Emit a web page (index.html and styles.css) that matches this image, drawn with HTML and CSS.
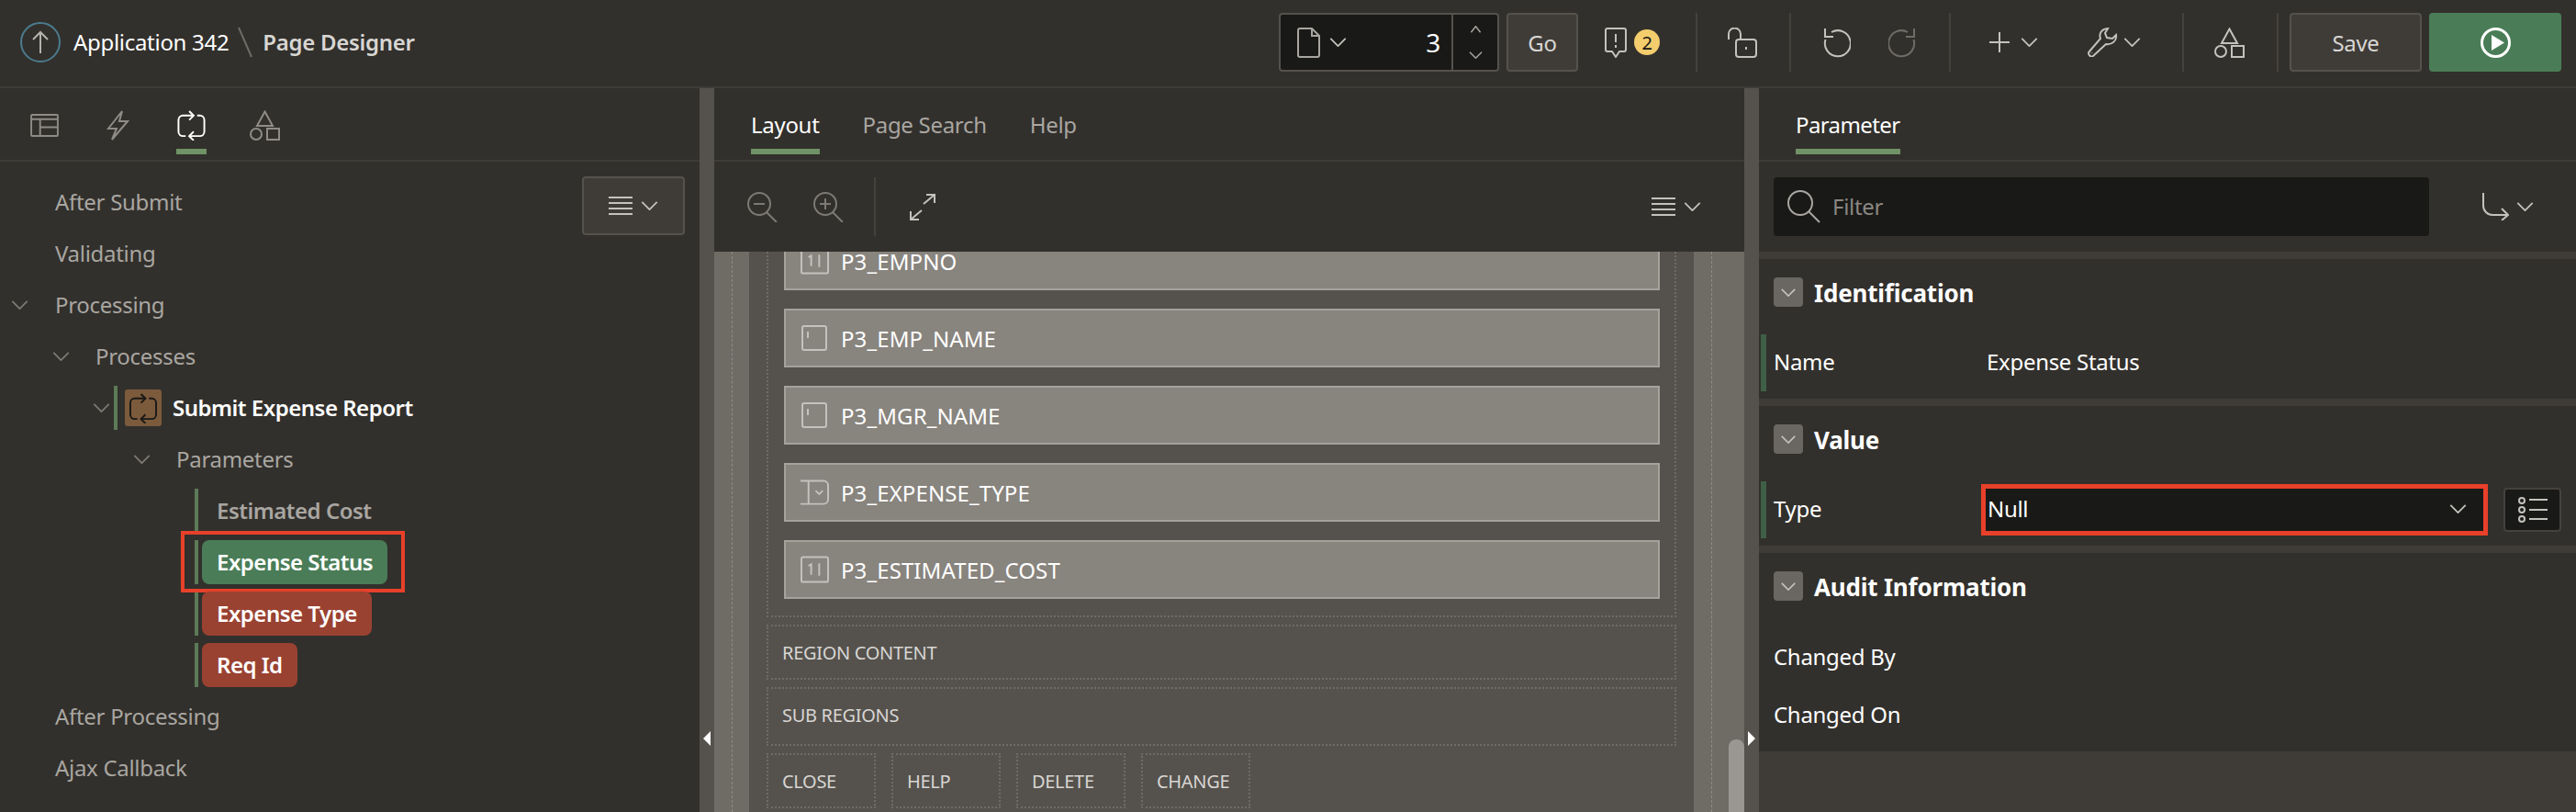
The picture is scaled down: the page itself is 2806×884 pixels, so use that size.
FILE: index.html
```html
<!DOCTYPE html>
<html>
<head>
    <title>Page Designer</title>
    <link rel="stylesheet" href="styles.css">
</head>
<body>
    <svg class="sprite" width="0" height="0">
        <symbol id="i-chev" viewBox="0 0 20 11"><path d="M1 1l9 9 9-9"/></symbol>
        <symbol id="i-up" viewBox="0 0 16 11"><path d="M1 10l7-9 7 9"/></symbol>
        <symbol id="i-menu" viewBox="0 0 26 22"><path d="M0 2h26M0 8h26M0 14h26M0 20h26"/></symbol>
        <symbol id="i-shapes" viewBox="0 0 33 33"><path d="M16.500 1.500L25 17H8z"/><circle cx="7" cy="26" r="6"/><rect x="19" y="20" width="13" height="12"/></symbol>
        <symbol id="i-table" viewBox="0 0 32 26"><rect x="1" y="1" width="30" height="24" rx="1"/><path d="M1 6h30M11 6v19M11 15h20"/></symbol>
        <symbol id="i-bolt" viewBox="0 0 25 33"><path d="M17 1L2 20h9L6 32l17-20h-9z"/></symbol>
        <symbol id="i-cycle" viewBox="0 0 33 34"><path d="M18 6H7a5 5 0 0 0-5 5v13a5 5 0 0 0 5 5h3M15 29h11a5 5 0 0 0 5-5V11a5 5 0 0 0-5-5h-3"/><path d="M14 1l5 5-5 5M19 24l-5 5 5 5"/></symbol>
        <symbol id="i-doc" viewBox="0 0 25 33"><path d="M3 1h13l8 8v21a2 2 0 0 1-2 2H3a2 2 0 0 1-2-2V3a2 2 0 0 1 2-2zM16 1v8h8"/></symbol>
        <symbol id="i-warn" viewBox="0 0 24 33"><path d="M3 1h18a2 2 0 0 1 2 2v21a2 2 0 0 1-2 2h-5l-4 6-4-6H3a2 2 0 0 1-2-2V3a2 2 0 0 1 2-2zM12 7v9M12 19v3"/></symbol>
        <symbol id="i-lock" viewBox="0 0 32 33"><path d="M1 13V7a6.500 6.500 0 0 1 13 0v6"/><rect x="9" y="13" width="22" height="19" rx="3"/><path d="M20 21v3"/></symbol>
        <symbol id="i-undo" viewBox="0 0 30 33"><path d="M9 5a14 14 0 1 1-6.500 8"/><path d="M2 1v9h9"/></symbol>
        <symbol id="i-plus" viewBox="0 0 22 22"><path d="M11 0v22M0 11h22"/></symbol>
        <symbol id="i-wrench" viewBox="0 0 33 32"><path d="M1.500 26.500L14 12c-2-5 1-10.500 8-11l-3 5 2 5 6 1 4-4c1 6-4 11-11 10L6 31c-3 2-6-2-4.500-4.500z"/><path d="M4.500 27.500v.5"/></symbol>
        <symbol id="i-goto" viewBox="0 0 29 30"><path d="M1 0v14a10 10 0 0 0 10 10h17M21 17l7 7-7 6"/></symbol>
        <symbol id="i-expand" viewBox="0 0 28 29"><path d="M15 11L27 1M18 1h9v9M13 18L1 28M1 19v9h9"/></symbol>
        <symbol id="i-zoomout" viewBox="0 0 33 33"><circle cx="13" cy="13" r="12"/><path d="M21 22l11 11M7 13h12"/></symbol>
        <symbol id="i-zoomin" viewBox="0 0 33 33"><circle cx="13" cy="13" r="12"/><path d="M21 22l11 11M7 13h12M13 7v12"/></symbol>
        <symbol id="i-search" viewBox="0 0 36 36"><circle cx="14" cy="14" r="13"/><path d="M23 23l12 12"/></symbol>
        <symbol id="i-list" viewBox="0 0 32 28"><circle cx="4" cy="4" r="3"/><circle cx="4" cy="14" r="3"/><circle cx="4" cy="24" r="3"/><path d="M12 3h20M12 14h20M12 24h20"/></symbol>
        <symbol id="i-num" viewBox="0 0 32 30"><rect x="1" y="1" width="30" height="28" rx="2"/><path d="M9 11l3-2v12M21 8v14"/></symbol>
        <symbol id="i-text" viewBox="0 0 28 28"><rect x="1" y="1" width="26" height="26" rx="2"/><path d="M7 7v7"/></symbol>
        <symbol id="i-select" viewBox="0 0 32 28"><path d="M0 1h26a5 5 0 0 1 5 5v16a5 5 0 0 1-5 5H0M9 1v26M17 12l4 4 4-4"/></symbol>
    </svg>

    <header class="topbar">
        <span class="up-btn"><svg class="ic i-arrow" viewBox="0 0 18 24"><path d="M9 24V1M1 9l8-8 8 8"/></svg></span>
        <span class="app-name">Application 342</span>
        <svg class="ic crumb-sep" viewBox="0 0 14 32"><path d="M0 0l14 32"/></svg>
        <span class="page-name">Page Designer</span>

        <div class="page-nav">
            <div class="page-nav-main">
                <svg class="ic i-doc"><use href="#i-doc"/></svg>
                <svg class="ic chev"><use href="#i-chev"/></svg>
                <span class="page-no">3</span>
            </div>
            <div class="page-step">
                <svg class="ic step-chev"><use href="#i-up"/></svg>
                <svg class="ic step-chev"><use href="#i-chev"/></svg>
            </div>
        </div>
        <button class="btn go-btn">Go</button>
        <svg class="ic t-warn"><use href="#i-warn"/></svg>
        <span class="badge">2</span>
        <span class="tb-sep s-lock"></span>
        <svg class="ic t-lock"><use href="#i-lock"/></svg>
        <span class="tb-sep s-undo"></span>
        <svg class="ic t-undo"><use href="#i-undo"/></svg>
        <svg class="ic t-redo"><use href="#i-undo"/></svg>
        <span class="tb-sep s-plus"></span>
        <svg class="ic t-plus"><use href="#i-plus"/></svg>
        <svg class="ic chev t-plus-chev"><use href="#i-chev"/></svg>
        <svg class="ic t-wrench"><use href="#i-wrench"/></svg>
        <svg class="ic chev t-wrench-chev"><use href="#i-chev"/></svg>
        <span class="tb-sep s-shapes"></span>
        <svg class="ic t-shapes"><use href="#i-shapes"/></svg>
        <span class="tb-sep s-save"></span>
        <button class="btn save-btn">Save</button>
        <button class="run-btn">
            <svg class="i-play" viewBox="0 0 33 33"><circle cx="16.500" cy="16.500" r="15"/><path class="play-tri" d="M12 8l14 8.500L12 25z"/></svg>
        </button>
    </header>

    <div class="workspace">
        <section class="panel-left">
            <div class="tabbar icon-tabs">
                <span class="icon-tab"><svg class="ic i-tab1"><use href="#i-table"/></svg></span>
                <span class="icon-tab"><svg class="ic i-tab2"><use href="#i-bolt"/></svg></span>
                <span class="icon-tab on"><svg class="ic i-tab3"><use href="#i-cycle"/></svg></span>
                <span class="icon-tab"><svg class="ic i-tab4"><use href="#i-shapes"/></svg></span>
            </div>
            <div class="tree">
                <button class="tree-menu">
                    <svg class="ic i-menu"><use href="#i-menu"/></svg>
                    <svg class="ic chev"><use href="#i-chev"/></svg>
                </button>
                <div class="row lvl0"><span class="label">After Submit</span></div>
                <div class="row lvl0"><span class="label">Validating</span></div>
                <div class="row lvl0"><svg class="ic twisty"><use href="#i-chev"/></svg><span class="label">Processing</span></div>
                <div class="row lvl1"><svg class="ic twisty"><use href="#i-chev"/></svg><span class="label">Processes</span></div>
                <div class="row lvl2">
                    <svg class="ic twisty"><use href="#i-chev"/></svg>
                    <span class="bar bar-tall"></span>
                    <span class="proc-icon"><svg class="ic"><use href="#i-cycle"/></svg></span>
                    <span class="label strong white">Submit Expense Report</span>
                </div>
                <div class="row lvl3"><svg class="ic twisty"><use href="#i-chev"/></svg><span class="label">Parameters</span></div>
                <div class="row lvl4"><span class="bar"></span><span class="pill plain">Estimated Cost</span></div>
                <div class="row lvl4"><span class="bar"></span><span class="pill ok callout">Expense Status</span></div>
                <div class="row lvl4"><span class="bar"></span><span class="pill bad">Expense Type</span></div>
                <div class="row lvl4"><span class="bar"></span><span class="pill bad">Req Id</span></div>
                <div class="row lvl0"><span class="label">After Processing</span></div>
                <div class="row lvl0"><span class="label">Ajax Callback</span></div>
            </div>
        </section>

        <div class="splitter"><span class="tri tri-left"></span></div>

        <section class="panel-center">
            <div class="tabbar text-tabs">
                <span class="tab on">Layout</span>
                <span class="tab">Page Search</span>
                <span class="tab">Help</span>
            </div>
            <div class="toolbar">
                <svg class="ic dim i-zoom"><use href="#i-zoomout"/></svg>
                <svg class="ic dim i-zoom zoom-in"><use href="#i-zoomin"/></svg>
                <span class="toolbar-sep"></span>
                <svg class="ic i-expand"><use href="#i-expand"/></svg>
                <svg class="ic i-menu center-menu"><use href="#i-menu"/></svg>
                <svg class="ic chev center-chev"><use href="#i-chev"/></svg>
            </div>
            <div class="canvas">
                <div class="canvas-dash">
                    <div class="canvas-page">
                        <div class="region items">
                            <div class="item"><svg class="ic fld-num"><use href="#i-num"/></svg>P3_EMPNO</div>
                            <div class="item"><svg class="ic fld-text"><use href="#i-text"/></svg>P3_EMP_NAME</div>
                            <div class="item"><svg class="ic fld-text"><use href="#i-text"/></svg>P3_MGR_NAME</div>
                            <div class="item"><svg class="ic fld-num"><use href="#i-select"/></svg>P3_EXPENSE_TYPE</div>
                            <div class="item"><svg class="ic fld-num"><use href="#i-num"/></svg>P3_ESTIMATED_COST</div>
                        </div>
                        <div class="region slot">REGION CONTENT</div>
                        <div class="region slot sub">SUB REGIONS</div>
                        <div class="slot-btns">
                            <div class="region slot-btn">CLOSE</div>
                            <div class="region slot-btn">HELP</div>
                            <div class="region slot-btn">DELETE</div>
                            <div class="region slot-btn">CHANGE</div>
                        </div>
                    </div>
                </div>
                <span class="thumb"></span>
            </div>
        </section>

        <div class="splitter"><span class="tri tri-right"></span></div>

        <section class="panel-right">
            <div class="tabbar text-tabs right-tabs">
                <span class="tab on">Parameter</span>
            </div>
            <div class="filter-bar">
                <div class="filter">
                    <svg class="ic i-search"><use href="#i-search"/></svg>
                    <span class="filter-text">Filter</span>
                </div>
                <svg class="ic i-goto"><use href="#i-goto"/></svg>
                <svg class="ic chev goto-chev"><use href="#i-chev"/></svg>
            </div>

            <div class="group">
                <div class="group-head"><span class="toggle"><svg class="ic"><use href="#i-chev"/></svg></span><h3>Identification</h3></div>
                <div class="prop edited"><span class="prop-name">Name</span><span class="prop-val">Expense Status</span></div>
            </div>
            <div class="group">
                <div class="group-head"><span class="toggle"><svg class="ic"><use href="#i-chev"/></svg></span><h3>Value</h3></div>
                <div class="prop edited">
                    <span class="prop-name">Type</span>
                    <div class="select">Null<svg class="ic chev select-chev"><use href="#i-chev"/></svg></div>
                    <span class="list-btn"><svg class="ic"><use href="#i-list"/></svg></span>
                </div>
            </div>
            <div class="group last">
                <div class="group-head"><span class="toggle"><svg class="ic"><use href="#i-chev"/></svg></span><h3>Audit Information</h3></div>
                <div class="prop"><span class="prop-name">Changed By</span></div>
                <div class="prop"><span class="prop-name">Changed On</span></div>
            </div>
            <div class="panel-foot"></div>
        </section>
    </div>
</body>
</html>
```

FILE: styles.css
```css
* { box-sizing: border-box; }
html, body { margin: 0; height: 884px; overflow: hidden; }
body { background: #32302c; color: #a9a6a1; font-family: "Noto Sans", Arial, sans-serif; font-size: 24px; letter-spacing: -0.3px; }
button { font-family: inherit; letter-spacing: inherit; padding: 0; cursor: pointer; }
h3 { margin: 0; }
.sprite { position: absolute; }
.ic { fill: none; stroke: currentColor; stroke-width: 2; overflow: visible; flex: none; display: block; }
.chev { width: 19px; height: 10px; color: #c4c2bd; }
.dim { color: #7d7a75; }

/* top bar */
.topbar { height: 96px; display: flex; align-items: center; padding: 0 16px 2px 22px; border-bottom: 2px solid #3f3c38; }
.up-btn { width: 44px; height: 44px; border: 2px solid #4b7c8f; border-radius: 50%; display: flex; align-items: center; justify-content: center; }
.i-arrow { width: 18px; height: 24px; color: #b5b3ae; }
.app-name { margin-left: 14px; margin-top: -2px; color: #fff; }
.crumb-sep { width: 14px; height: 32px; margin-left: 11px; color: #6f6c67; }
.page-name { margin-left: 12px; margin-top: -2px; color: #d8d6d3; font-weight: 600; letter-spacing: -0.3px; }
.page-nav { margin-left: auto; width: 240px; height: 64px; display: flex; background: #191917; border: 2px solid #55524d; border-radius: 4px; }
.page-nav-main { flex: 1; display: flex; align-items: center; padding-left: 18px; border-right: 2px solid #55524d; }
.i-doc { width: 25px; height: 33px; color: #a9a6a1; }
.page-nav-main .chev { margin-left: 10px; }
.page-no { margin-left: auto; margin-right: 12px; color: #fff; font-size: 28px; }
.page-step { width: 48px; display: flex; flex-direction: column; align-items: center; justify-content: space-between; padding: 12px 0; }
.step-chev { width: 15px; height: 8px; color: #a9a6a1; }
.btn { height: 64px; background: #3f3c38; border: 2px solid #55524d; border-radius: 4px; color: #d8d6d3; font-size: 24px; }
.go-btn { width: 78px; margin-left: 8px; }
.t-warn { width: 24px; height: 33px; margin-left: 29px; color: #c4c2bd; }
.badge { width: 28px; height: 28px; margin-left: 8px; border-radius: 50%; background: #f4cd6d; color: #161513; font-size: 20px; display: flex; align-items: center; justify-content: center; }
.tb-sep { width: 2px; height: 64px; background: #45423e; flex: none; }
.s-lock { margin-left: 39px; }
.t-lock { width: 32px; height: 33px; margin-left: 33px; color: #c4c2bd; }
.s-undo { margin-left: 35px; }
.t-undo { width: 30px; height: 33px; margin-left: 35px; color: #c4c2bd; }
.t-redo { width: 30px; height: 33px; margin-left: 41px; color: #6f6c67; transform: scaleX(-1); }
.s-plus { margin-left: 36px; }
.t-plus { width: 22px; height: 22px; margin-left: 42px; color: #c4c2bd; }
.t-plus-chev { margin-left: 12px; }
.t-wrench { width: 33px; height: 32px; margin-left: 54px; color: #c4c2bd; }
.t-wrench-chev { margin-left: 6px; }
.s-shapes { margin-left: 45px; }
.t-shapes { width: 33px; height: 33px; margin-left: 33px; color: #c4c2bd; }
.s-save { margin-left: 35px; }
.save-btn { width: 144px; margin-left: 12px; }
.run-btn { width: 144px; height: 64px; margin-left: 8px; background: #4a7d57; border: none; border-radius: 4px; display: flex; align-items: center; justify-content: center; }
.i-play { width: 33px; height: 33px; fill: none; stroke: #fff; stroke-width: 3; }
.play-tri { fill: #fff; stroke: none; }

/* panels */
.workspace { height: 788px; display: flex; }
.panel-left { width: 762px; flex: none; }
.panel-center { width: 1122px; flex: none; display: flex; flex-direction: column; }
.panel-right { flex: 1; display: flex; flex-direction: column; }
.splitter { width: 16px; flex: none; background: #55524d; display: flex; align-items: flex-end; justify-content: center; padding-bottom: 72px; }
.tri { width: 0; height: 0; border-top: 8px solid transparent; border-bottom: 8px solid transparent; }
.tri-left { border-right: 8px solid #fff; }
.tri-right { border-left: 8px solid #fff; }
.tabbar { height: 80px; display: flex; border-bottom: 2px solid #3f3c38; }

.icon-tabs { align-items: flex-start; padding-left: 33px; }
.icon-tab { height: 72px; margin-right: 52px; padding-top: 24px; border-bottom: 6px solid transparent; display: block; }
.icon-tab:nth-child(2) { margin-right: 51px; }
.icon-tab:nth-child(3) { margin-right: 47px; }
.icon-tab.on { border-bottom-color: #6f9266; color: #fff; }
.icon-tab .ic { color: #8f8c87; }
.icon-tab.on .ic { color: #fff; }
.i-tab1 { width: 31px; height: 25px; margin-top: 4px; }
.i-tab2 { width: 25px; height: 33px; }
.i-tab3 { width: 33px; height: 33px; }
.i-tab4 { width: 33px; height: 33px; }

/* tree */
.tree { position: relative; padding-top: 16px; }
.tree-menu { position: absolute; top: 16px; right: 16px; width: 112px; height: 64px; background: #3f3c38; border: 2px solid #55524d; border-radius: 4px; display: flex; align-items: center; justify-content: center; gap: 9px; color: #d8d6d3; }
.i-menu { width: 26px; height: 22px; color: #c4c2bd; }
.row { height: 56px; display: flex; align-items: center; }
.label { margin-top: -2px; }
.twisty { width: 19px; height: 10px; color: #7d7a75; }
.lvl0 { padding-left: 60px; }
.lvl0 .twisty { margin-left: -48px; margin-right: 29px; }
.lvl1 { padding-left: 57px; }
.lvl1 .twisty { margin-right: 28px; }
.lvl2 { padding-left: 101px; }
.lvl2 .twisty { margin-right: 4px; }
.lvl3 { padding-left: 145px; }
.lvl3 .twisty { margin-right: 28px; }
.lvl4 { padding-left: 212px; }
.bar { width: 4px; height: 48px; background: #5c7a57; flex: none; }
.bar-tall { margin-right: 8px; }
.proc-icon { width: 40px; height: 40px; background: #7c5a3c; border-radius: 3px; display: flex; align-items: center; justify-content: center; color: #191917; }
.proc-icon .ic { width: 32px; height: 33px; }
.strong { font-weight: 600; letter-spacing: -0.5px; }
.white { color: #fff; }
.lvl2 .label { margin-left: 12px; }
.pill { height: 48px; margin-left: 4px; padding: 0 16px 2px; border-radius: 8px; display: flex; align-items: center; color: #fff; font-weight: 600; letter-spacing: -0.5px; position: relative; }
.pill.plain { color: #a9a6a1; }
.pill.ok { background: #4a7d57; }
.pill.bad { background: #9a4232; }
.callout::after { content: ""; position: absolute; top: -10px; bottom: -9px; left: -23px; right: -19px; border: 4px solid #e8402a; }

/* layout tabs */
.text-tabs { align-items: flex-start; padding-left: 40px; gap: 47px; }
.tab { height: 72px; padding-top: 22px; line-height: 36px; border-bottom: 6px solid transparent; }
.tab.on { color: #fff; border-bottom-color: #6f9266; }
.toolbar { height: 98px; display: flex; align-items: center; padding-left: 36px; flex: none; }
.i-zoom { width: 33px; height: 33px; }
.zoom-in { margin-left: 39px; }
.toolbar-sep { width: 2px; height: 64px; margin-left: 33px; background: #45423e; }
.i-expand { width: 28px; height: 29px; margin-left: 37px; color: #c4c2bd; }
.center-menu { margin-left: auto; }
.center-chev { margin-left: 9px; margin-right: 47px; }

/* canvas */
.canvas { flex: 1; min-height: 0; position: relative; background: #6f6b65; padding: 0 35px 0 19px; overflow: hidden; }
.canvas-dash { height: 100%; padding: 0 19px 0 18px; border-left: 1px dashed #8f8b85; border-right: 1px dashed #8f8b85; }
.canvas-page { height: 100%; background: #55524d; padding: 0 19px 4px 19px; display: flex; flex-direction: column; justify-content: flex-end; gap: 8px; color: #d8d6d3; font-size: 20px; }
.region { border: 2px dotted #6f6b65; flex: none; }
.items { padding: 0 16px 18px 17px; display: flex; flex-direction: column; gap: 20px; }
.item { height: 64px; background: #88847e; border: 2px solid #a5a29c; display: flex; align-items: center; color: #fff; font-size: 24px; letter-spacing: 0.1px; padding-left: 16px; flex: none; }
.fld-num { width: 31px; height: 30px; margin-right: 13px; color: #c4c2bd; }
.fld-text { width: 28px; height: 28px; margin-left: 1px; margin-right: 15px; color: #c4c2bd; }
.slot { height: 60px; display: flex; align-items: center; padding-left: 15px; }
.slot.sub { height: 64px; padding-bottom: 3px; }
.slot-btns { display: flex; gap: 17px; flex: none; }
.slot-btn { width: 119px; height: 60px; display: flex; align-items: center; padding-left: 15px; }
.thumb { position: absolute; right: 0; bottom: 0; width: 17px; height: 79px; background: #9a9793; border-radius: 8px 8px 0 0; }

/* property editor */
.right-tabs { gap: 0; }
.right-tabs .tab { letter-spacing: -0.6px; }
.filter-bar { height: 98px; display: flex; align-items: center; padding-left: 16px; flex: none; }
.filter { width: 714px; height: 64px; background: #191917; border-radius: 4px; display: flex; align-items: center; padding-left: 15px; }
.i-search { width: 36px; height: 36px; color: #a9a6a1; }
.filter-text { margin-left: 13px; margin-top: -2px; color: #8a8782; }
.i-goto { width: 29px; height: 30px; margin-left: 58px; color: #c4c2bd; }
.goto-chev { margin-left: 8px; }
.group { border-top: 8px solid #3f3c38; padding-bottom: 8px; flex: none; }
.group.last { padding-bottom: 8px; }
.group.last .prop { height: 63px; }
.group-head { height: 82px; display: flex; align-items: flex-start; padding: 20px 0 0 16px; color: #fff; }
.group-head h3 { margin-left: 12px; font-size: 26px; line-height: 34px; font-weight: 700; letter-spacing: -0.2px; }
.toggle { width: 32px; height: 32px; background: #6a6762; border-radius: 4px; display: flex; align-items: center; justify-content: center; color: #c4c2bd; }
.toggle .ic { width: 16px; height: 9px; }
.prop { height: 62px; display: flex; align-items: center; padding-left: 16px; color: #fff; }
.prop.edited { position: relative; }
.prop.edited::before { content: ""; position: absolute; left: 2px; top: 0; bottom: 0; width: 6px; background: #3f5f47; }
.prop-name { width: 232px; flex: none; margin-top: -3px; }
.prop-val { margin-top: -3px; }
.select { width: 552px; height: 56px; margin-left: -6px; background: #191917; border: 5px solid #e8402a; display: flex; align-items: center; padding: 0 18px 3px 2px; flex: none; }
.select-chev { margin-left: auto; }
.list-btn { width: 63px; height: 48px; margin-left: 17px; background: #191917; border: 2px solid #45423e; border-radius: 4px; display: flex; align-items: center; justify-content: center; color: #c4c2bd; }
.list-btn .ic { width: 32px; height: 28px; }
.panel-foot { flex: 1; background: #3f3c38; }
```
